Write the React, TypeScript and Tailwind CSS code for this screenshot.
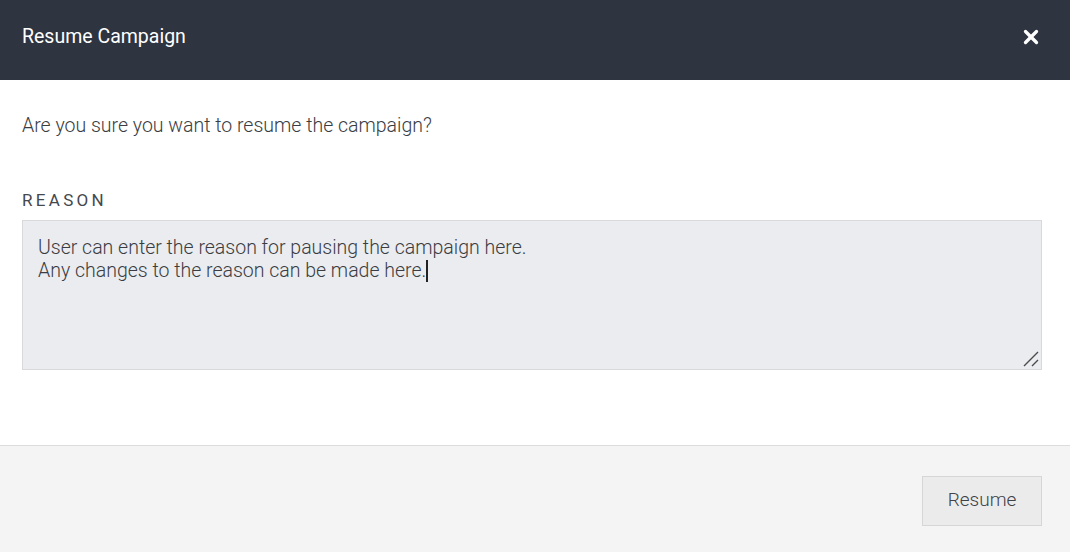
import { X } from 'lucide-react';

const reasonLines = [
  'User can enter the reason for pausing the campaign here.',
  'Any changes to the reason can be made here.',
];

export default function App() {
  return (
    <div className="w-[1070px] h-[552px] bg-white flex flex-col font-['Roboto',sans-serif] text-[#3f4247]">
      {/* header */}
      <header className="h-20 shrink-0 bg-[#2e3440] flex items-center justify-between pl-[22px] pr-[28px] pb-[7px]">
        <h1 className="text-[19.5px] text-white font-normal">Resume Campaign</h1>
        <button className="text-white">
          <X size={22} strokeWidth={3.6} />
        </button>
      </header>

      {/* body */}
      <div className="flex-1 px-[22px] pt-[34px]">
        <p className="text-[19.5px] leading-[24px] font-light text-[#3a3d42]">
          Are you sure you want to resume the campaign?
        </p>
        <label className="block mt-[52px] text-[17px] leading-[20px] font-normal tracking-[3.3px] text-[#45484d]">
          REASON
        </label>
        {/* reason box, caret sits after the last line */}
        <div
          role="textbox"
          aria-multiline="true"
          className="relative mt-[10px] w-[1020px] h-[150px] bg-[#ebecf0] border border-[#d9d9dc] px-[15px] pt-[15px] pb-[13px] text-[19.5px] leading-[23px] font-light text-[#3a3d42]"
        >
          {reasonLines.map((line, i) => (
            <div key={i}>
              {line}
              {i === reasonLines.length - 1 && (
                <span className="inline-block w-[2px] h-[22px] bg-[#222] align-[-5px]" />
              )}
            </div>
          ))}
          {/* resize grip */}
          <svg
            className="absolute right-[2px] bottom-[2px] pointer-events-none"
            width="16"
            height="16"
            viewBox="0 0 16 16"
          >
            <path d="M1 15 L15 1 M9 15 L15 9" stroke="#4a4a4a" strokeWidth="1.4" />
          </svg>
        </div>
      </div>

      {/* footer */}
      <footer className="h-[107px] shrink-0 bg-[#f4f4f4] border-t border-[#dcdcdc] flex items-center justify-end pr-[28px] pt-[3px]">
        <button className="w-[120px] h-[50px] bg-[#ebebeb] border border-[#d6d6d6] text-[19px] font-light text-[#3f4247]">
          Resume
        </button>
      </footer>
    </div>
  );
}
